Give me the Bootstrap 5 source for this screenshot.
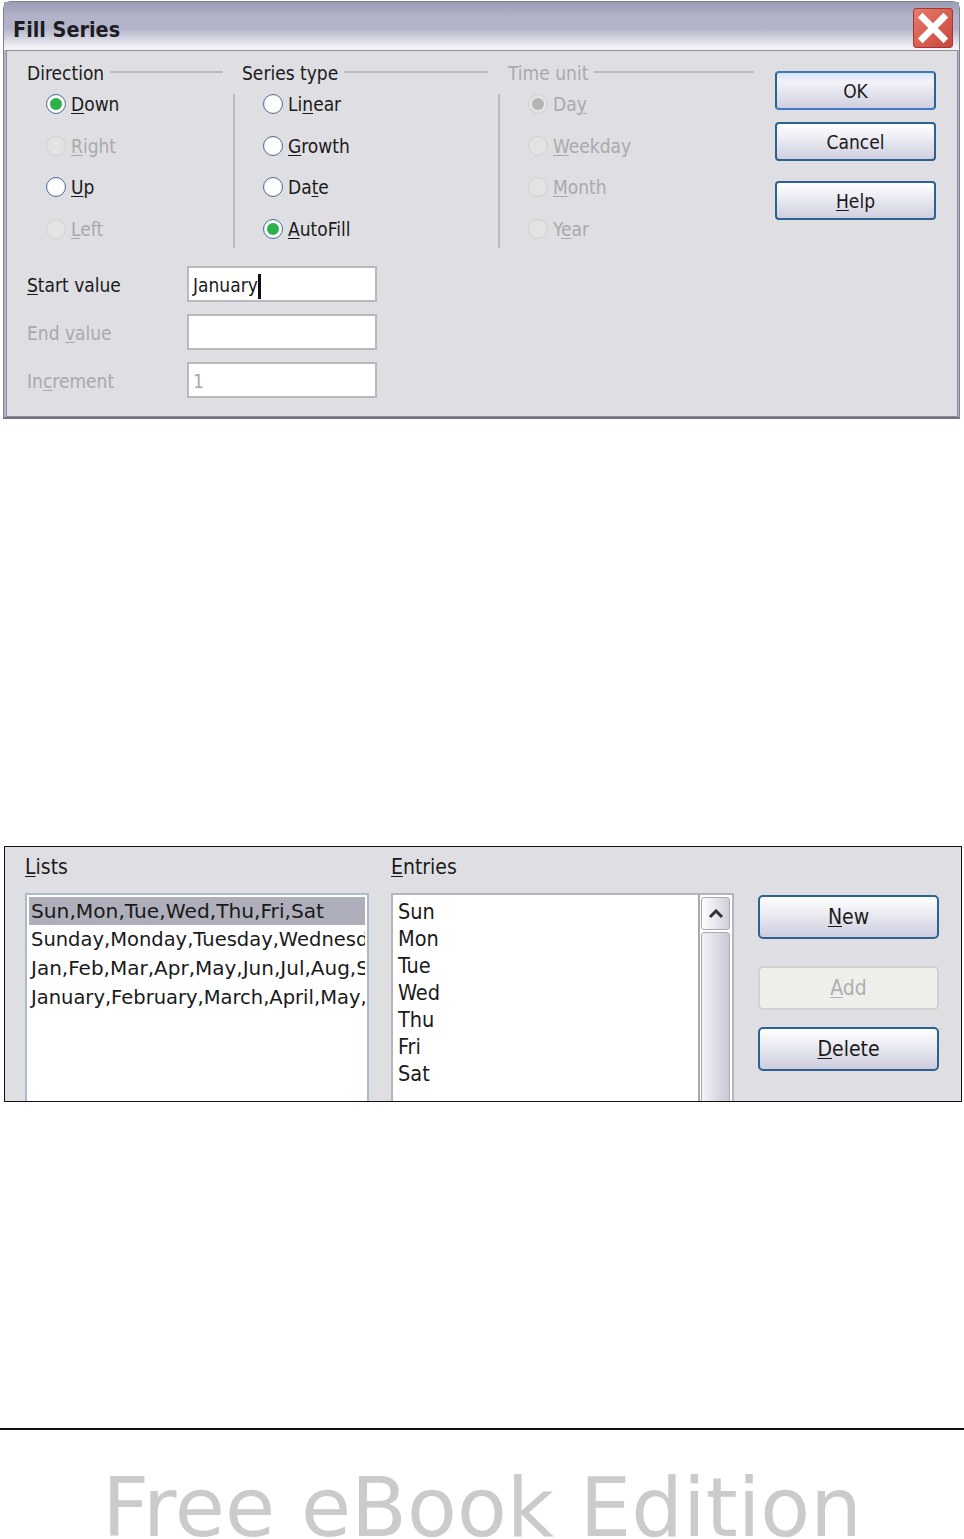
<!doctype html>
<html lang="en">
<head>
<meta charset="utf-8">
<title>Fill Series</title>
<link href="https://cdn.jsdelivr.net/npm/bootstrap@5.3.0/dist/css/bootstrap.min.css" rel="stylesheet">
<style>
html,body{background:#fff;height:1539px;overflow:hidden}
body{font-family:"DejaVu Sans Condensed","DejaVu Sans",sans-serif;font-size:19px;line-height:24px;color:#1a1a1a}
u{text-underline-offset:2px;text-decoration-thickness:1px}
.fill-dlg{margin:1px 4px 0 3px;height:418px;border:1px solid #7d7f92;border-bottom:2px solid #6f7186;border-radius:8px 8px 0 0;background:#b3b4c8}
.fill-title{height:48px;background:linear-gradient(#9c9db6 0,#b2b3c9 30%,#b3b4c9 55%,#f4f4f8 96%);font-weight:700;font-size:21.4px;line-height:28px;color:#1c1c22}
.fill-name{padding:14px 0 0 9px}
.close-x{width:40px;height:40px;margin:6px 6px 0 0;background:linear-gradient(135deg,#e77b6b,#c9463b);border:1px solid #a33;border-radius:3px}
.fill-panel{height:367px;margin:0 1px 0 2px;background:#dfdfe3;border:1px solid #8c8d9b;padding:9px 0 0 20px}
.grp{width:196px}
.grp-two{width:246px;margin-left:19px}
.grp-three{width:246px;margin-left:20px}
.grp-head{height:26px}
.grp-head i{flex:1;height:2px;background:#b9b9be;margin:-2px 0 0 6px}
.grp-rows{display:flex;flex-direction:column;border-left:2px solid #bcbcc0;margin:8px 0 0 -9px;padding:0 0 0 28px;height:154px}
.grp-three .grp-rows{margin-left:-10px}
.first-rows{border-left:0;margin:8px 0 0 0;padding-left:19px}
.ropt{height:41.7px;gap:5px;flex:none}
.grp-rows>.ropt:first-child{margin-top:-11px}
.rdot{width:20px;height:20px;border-radius:50%;border:1.5px solid #4a7199;background:radial-gradient(circle,#fff 55%,#dcdde6);flex:none;display:block;position:relative}
.rdot.on::after{content:"";position:absolute;inset:3px;border-radius:50%;background:#2cb24a}
.rdot.off{border-color:#cfd0cd;background:#e3e3e5}
.rdot.off.on::after{background:#b5b6b3}
.fld-zone{margin-top:18px}
.fld-row{height:48px}
.fld-lbl{width:160px;padding-top:7px}
.fld-box{width:190px;height:36px;background:#fff;border:2px solid #b9babd;border-radius:0;padding:0 4px;line-height:34px;color:#1a1a1a}
.muted-lbl{color:#a9a9ac}
.caret-mark{display:inline-block;width:3px;height:25px;background:#111;vertical-align:-7px}
.act-col{width:161px;margin-left:21px;padding-top:11px}
.act-btn{display:block;width:100%;padding:0;height:39px;line-height:37px;font-size:19px;color:#1a1a1a;border:2px solid #2c6290;border-radius:4px;background:linear-gradient(#fff,#f1f1f6 30%,#cfcfe0)}
.ok-btn{border-bottom-color:#3f78c8;border-top-color:#3d7ab8;background:linear-gradient(#d7e3f6,#f3f3f8 25%,#cfcfe0)}
.cancel-gap{margin-top:12px}
.help-gap{margin-top:20px}
.sort-dlg{margin:427px 2px 0 4px;height:256px;background:#dfdfe3;border:1px solid #111;overflow:hidden;font-size:21px;line-height:27px;padding:7px 0 0 20px}
.col-lists{width:344px}
.col-entries{width:343px;margin-left:22px}
.col-act{width:181px;margin-left:24px;padding-top:41px}
.lst-head{height:39px}
.lst-box{height:240px;background:#fff;border:2px solid #a7bccd;border-radius:0;padding:2px;overflow:hidden}
.lst-box.plain{border-color:#b4b5b9}
.lst-item{border:0;background:none;padding:0 0 0 2px;line-height:29px;height:29px;white-space:nowrap;overflow:hidden;color:#1a1a1a;font-family:"DejaVu Sans",sans-serif;font-size:20px}
.lst-item.picked{background:#aeafba;height:28px;font-size:20.2px}
.lst-tight{font-size:19.5px}
.ent-item{padding:0 0 0 5px;line-height:27px;height:27px;font-family:"DejaVu Sans Condensed","DejaVu Sans",sans-serif;font-size:21.5px}
.ent-list{padding-top:3px}
.scroll-col{width:34px;border-left:2px solid #a9a9ad;padding:2px 2px 0 1px}
.scr-up{height:33px;border:1px solid #a9aab4;border-radius:3px;background:linear-gradient(90deg,#fff,#cfcfdc)}
.scr-track{height:200px;margin-top:2px;border:1px solid #a9aab4;border-radius:3px;background:linear-gradient(90deg,#f2f2f6,#c9c9d8)}
.big-btn{display:block;width:100%;height:44px;padding:0;font-size:21px;line-height:41px;color:#1a1a1a;border:2px solid #2c6290;border-radius:5px;background:linear-gradient(#fff,#f1f1f6 30%,#cdcdde)}
.big-btn:disabled{opacity:1;background:#eeeeeb;border-color:#d2d2cf;color:#b0b0b0}
.add-gap{margin-top:27px}
.del-gap{margin-top:17px}
.foot-zone{margin-top:326px;border-top:2px solid #111;height:112px;text-align:center;overflow:hidden;font-size:81.5px;line-height:90px;padding-top:33px;color:#cbcbcb;font-family:"DejaVu Sans",sans-serif}
</style>
</head>
<body>
<section class="fill-dlg">
  <div class="fill-title d-flex justify-content-between">
    <span class="fill-name">Fill Series</span>
    <svg class="close-x" viewBox="0 0 40 40" aria-hidden="true"><path d="M9 9 31 31M31 9 9 31" stroke="#fff" stroke-width="7" stroke-linecap="square"/></svg>
  </div>
  <div class="fill-panel d-flex">
    <div class="flex-grow-0">
      <div class="d-flex">
        <div class="grp">
          <div class="grp-head d-flex align-items-center"><span>Direction</span><i></i></div>
          <div class="grp-rows first-rows">
            <div class="ropt d-flex align-items-center"><span class="rdot on"></span><span><u>D</u>own</span></div>
            <div class="ropt d-flex align-items-center muted-lbl"><span class="rdot off"></span><span><u>R</u>ight</span></div>
            <div class="ropt d-flex align-items-center"><span class="rdot"></span><span><u>U</u>p</span></div>
            <div class="ropt d-flex align-items-center muted-lbl"><span class="rdot off"></span><span><u>L</u>eft</span></div>
          </div>
        </div>
        <div class="grp-two">
          <div class="grp-head d-flex align-items-center"><span>Series type</span><i></i></div>
          <div class="grp-rows">
            <div class="ropt d-flex align-items-center"><span class="rdot"></span><span>Li<u>n</u>ear</span></div>
            <div class="ropt d-flex align-items-center"><span class="rdot"></span><span><u>G</u>rowth</span></div>
            <div class="ropt d-flex align-items-center"><span class="rdot"></span><span>Da<u>t</u>e</span></div>
            <div class="ropt d-flex align-items-center"><span class="rdot on"></span><span><u>A</u>utoFill</span></div>
          </div>
        </div>
        <div class="grp-three">
          <div class="grp-head d-flex align-items-center muted-lbl"><span>Time unit</span><i></i></div>
          <div class="grp-rows muted-lbl">
            <div class="ropt d-flex align-items-center"><span class="rdot off on"></span><span>Da<u>y</u></span></div>
            <div class="ropt d-flex align-items-center"><span class="rdot off"></span><span><u>W</u>eekday</span></div>
            <div class="ropt d-flex align-items-center"><span class="rdot off"></span><span><u>M</u>onth</span></div>
            <div class="ropt d-flex align-items-center"><span class="rdot off"></span><span>Y<u>e</u>ar</span></div>
          </div>
        </div>
      </div>
      <div class="fld-zone">
        <div class="fld-row d-flex"><span class="fld-lbl"><u>S</u>tart value</span><div class="fld-box">January<span class="caret-mark"></span></div></div>
        <div class="fld-row d-flex"><span class="fld-lbl muted-lbl">End <u>v</u>alue</span><div class="fld-box"></div></div>
        <div class="fld-row d-flex"><span class="fld-lbl muted-lbl">In<u>c</u>rement</span><div class="fld-box muted-lbl">1</div></div>
      </div>
    </div>
    <div class="act-col d-flex flex-column">
      <button type="button" class="btn act-btn ok-btn">OK</button>
      <button type="button" class="btn act-btn cancel-gap">Cancel</button>
      <button type="button" class="btn act-btn help-gap"><u>H</u>elp</button>
    </div>
  </div>
</section>

<section class="sort-dlg d-flex">
  <div class="col-lists">
    <div class="lst-head"><u>L</u>ists</div>
    <div class="list-group lst-box">
      <div class="list-group-item lst-item picked">Sun,Mon,Tue,Wed,Thu,Fri,Sat</div>
      <div class="list-group-item lst-item lst-tight">Sunday,Monday,Tuesday,Wednesday,Thursday</div>
      <div class="list-group-item lst-item">Jan,Feb,Mar,Apr,May,Jun,Jul,Aug,Sep,Oct</div>
      <div class="list-group-item lst-item lst-tight">January,February,March,April,May,...</div>
    </div>
  </div>
  <div class="col-entries">
    <div class="lst-head"><u>E</u>ntries</div>
    <div class="lst-box plain d-flex p-0">
      <div class="list-group flex-grow-1 ent-list">
        <div class="list-group-item lst-item ent-item">Sun</div>
        <div class="list-group-item lst-item ent-item">Mon</div>
        <div class="list-group-item lst-item ent-item">Tue</div>
        <div class="list-group-item lst-item ent-item">Wed</div>
        <div class="list-group-item lst-item ent-item">Thu</div>
        <div class="list-group-item lst-item ent-item">Fri</div>
        <div class="list-group-item lst-item ent-item">Sat</div>
      </div>
      <div class="scroll-col">
        <div class="scr-up d-flex align-items-center justify-content-center"><svg width="16" height="10" viewBox="0 0 16 10" aria-hidden="true"><path d="M2 8 8 2l6 6" fill="none" stroke="#333" stroke-width="3"/></svg></div>
        <div class="scr-track"></div>
      </div>
    </div>
  </div>
  <div class="col-act">
    <button type="button" class="btn big-btn"><u>N</u>ew</button>
    <button type="button" class="btn big-btn add-gap" disabled><u>A</u>dd</button>
    <button type="button" class="btn big-btn del-gap"><u>D</u>elete</button>
  </div>
</section>

<footer class="foot-zone">Free eBook Edition</footer>
<script src="https://cdn.jsdelivr.net/npm/bootstrap@5.3.0/dist/js/bootstrap.bundle.min.js"></script>
</body>
</html>
